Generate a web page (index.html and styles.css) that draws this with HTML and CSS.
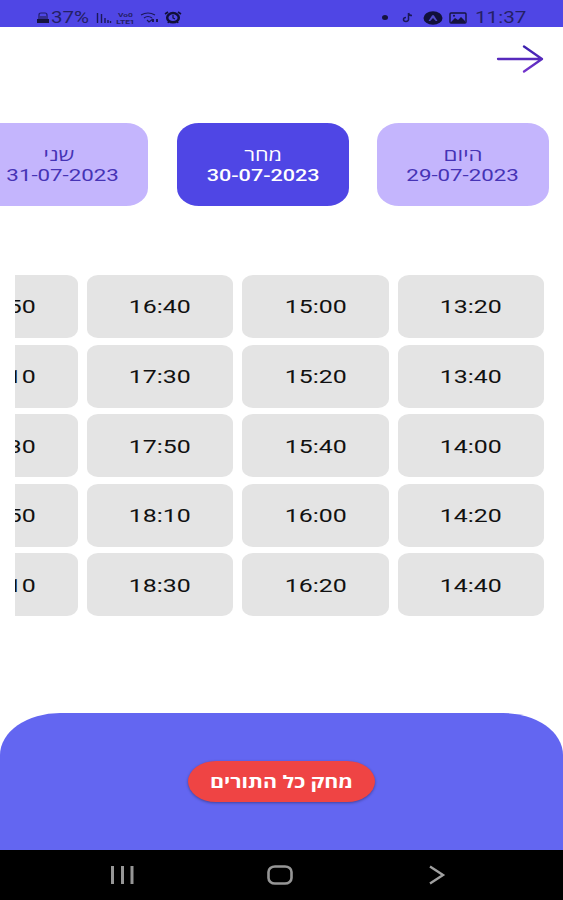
FILE: index.html
```html
<!DOCTYPE html>
<html lang="he">
<head>
  <meta charset="UTF-8">
  <title>תורים</title>
  <link rel="stylesheet" href="styles.css">
</head>
<body>

  <header class="status">
    <div class="status-group">
      <svg class="battery" width="14" height="12" viewBox="0 0 14 12">
        <path d="M3 6V3Q3 1 5 1H9Q11 1 11 3V6" fill="none" stroke="#201d70" stroke-width="1.2"/>
        <path d="M2 4H12V7H2Z" fill="#352e91"/>
        <path d="M1 7H13V11H1Z" fill="#15133f"/>
      </svg>
      <span class="status-text percent"><span class="wide">37%</span></span>
      <svg class="signal" width="16" height="12" viewBox="0 0 16 12" stroke="#1b1857" stroke-width="1.4">
        <path d="M1.5 1V11M5.5 2V11M9 6V11M12 8V11M14.5 9V11"/>
      </svg>
      <span class="volte"><span>Vo0</span><span>LTE1</span></span>
      <svg class="wifi" width="20" height="12" viewBox="0 0 20 12" fill="none" stroke="#1b1857" stroke-width="1.2">
        <path d="M1 3Q8 -1 15 3M4 6Q8 3 12 6M7 8L9 10L13 7"/>
        <path d="M13 10V7M17 7V10" stroke-width="2"/>
      </svg>
      <svg class="alarm" width="18" height="13" viewBox="0 0 18 13">
        <path d="M1 3L4 1M17 3L14 1M4 12L5 10M14 12L13 10" stroke="#100f38" stroke-width="1.6"/>
        <ellipse cx="9" cy="6.7" rx="5.8" ry="4.6" fill="none" stroke="#100f38" stroke-width="2.5"/>
        <path d="M9 4V7L11 8" fill="none" stroke="#100f38" stroke-width="1.2"/>
      </svg>
    </div>
    <div class="status-group">
      <span class="dot"></span>
      <svg class="note" width="11" height="11" viewBox="0 0 11 11" fill="none" stroke="#1b1857" stroke-width="1.5">
        <path d="M6.5 1V7.5A2.5 2 0 1 1 4 5.5M6.5 1Q7 3.5 10 3.5"/>
      </svg>
      <svg class="expo" width="20" height="14" viewBox="0 0 20 14">
        <ellipse cx="10" cy="7" rx="9.5" ry="6.8" fill="#11103b"/>
        <path d="M5.5 10L9 4.5Q10 3.5 11 4.5L14.5 10L12.8 10L10 7L7.2 10Z" fill="#5049c9"/>
      </svg>
      <svg class="picture" width="18" height="12" viewBox="0 0 18 12">
        <rect x="1" y="1" width="16" height="10" rx="1" fill="none" stroke="#15133f" stroke-width="1.4"/>
        <path d="M2 10L6 6L9 8L12 5L16 9V11H2Z" fill="#15133f"/>
        <circle cx="5" cy="3.8" r="1" fill="#15133f"/>
      </svg>
      <span class="status-text clock"><span class="wide">11:37</span></span>
    </div>
  </header>

  <nav class="topbar">
    <svg width="48" height="30" viewBox="0 0 48 30" fill="none" stroke="url(#arrow)" stroke-width="2.3" stroke-linecap="round" stroke-linejoin="round">
      <defs>
        <linearGradient id="arrow" gradientUnits="userSpaceOnUse" x1="0" y1="2" x2="0" y2="28">
          <stop offset="0" stop-color="#3a20ad"/>
          <stop offset="1" stop-color="#7434cc"/>
        </linearGradient>
      </defs>
      <path d="M2 15H46M28 2.5L46 15L28 27.5"/>
    </svg>
  </nav>

  <section class="days" dir="rtl">
    <div class="day"><span class="wide">היום</span><span class="wide" dir="ltr">29-07-2023</span></div>
    <div class="day active"><span class="wide">מחר</span><span class="wide" dir="ltr">30-07-2023</span></div>
    <div class="day monday"><span class="wide name">שני</span><span class="wide" dir="ltr">31-07-2023</span></div>
  </section>

  <main class="slots" dir="rtl">
    <div class="slot"><span class="wide">13:20</span></div>
    <div class="slot"><span class="wide">13:40</span></div>
    <div class="slot"><span class="wide">14:00</span></div>
    <div class="slot"><span class="wide">14:20</span></div>
    <div class="slot"><span class="wide">14:40</span></div>
    <div class="slot"><span class="wide">15:00</span></div>
    <div class="slot"><span class="wide">15:20</span></div>
    <div class="slot"><span class="wide">15:40</span></div>
    <div class="slot"><span class="wide">16:00</span></div>
    <div class="slot"><span class="wide">16:20</span></div>
    <div class="slot"><span class="wide">16:40</span></div>
    <div class="slot"><span class="wide">17:30</span></div>
    <div class="slot"><span class="wide">17:50</span></div>
    <div class="slot"><span class="wide">18:10</span></div>
    <div class="slot"><span class="wide">18:30</span></div>
    <div class="slot"><span class="wide">18:50</span></div>
    <div class="slot"><span class="wide">19:10</span></div>
    <div class="slot"><span class="wide">19:30</span></div>
    <div class="slot"><span class="wide">19:50</span></div>
    <div class="slot"><span class="wide">20:10</span></div>
  </main>

  <footer class="bottom">
    <button class="delete" dir="rtl"><span class="wide">מחק כל התורים</span></button>
  </footer>

  <div class="android-nav">
    <svg width="26" height="20" viewBox="0 0 26 20" stroke="#969696" stroke-width="3">
      <path d="M3.5 1V19M13.5 1V19M23 1V19"/>
    </svg>
    <svg class="home" width="28" height="20" viewBox="0 0 28 20">
      <rect x="2.5" y="1.5" width="23" height="17" rx="6.5" ry="5.5" fill="none" stroke="#969696" stroke-width="2.6"/>
    </svg>
    <svg width="18" height="20" viewBox="0 0 18 20" fill="none" stroke="#a0a0a0" stroke-width="2.4">
      <path d="M2 1.5L15 10L2 18.5"/>
    </svg>
  </div>

</body>
</html>
```
FILE: styles.css
```css
* {
  box-sizing: border-box;
}
body {
  margin: 0;
  width: 563px;
  height: 900px;
  overflow: hidden;
  display: flex;
  flex-direction: column;
  background-color: #fff;
  font-family: Roboto, "Open Sans", "Liberation Sans", sans-serif;
}
svg {
  display: block;
  flex: none;
}
.wide {
  display: block;
  white-space: nowrap;
  transform: scaleX(1.29);
}
.status {
  height: 27px;
  flex: none;
  display: flex;
  justify-content: space-between;
  padding: 8px 37px 0 36px;
  background-color: #4f46e5;
  color: #242066;
}
.status-group {
  display: flex;
  align-items: center;
  height: 19px;
}
.status-text {
  font-size: 16px;
  line-height: 19px;
}
.status-text .wide {
  transform-origin: left;
}
.percent {
  width: 45px;
  margin-left: 1px;
}
.percent .wide {
  transform: scaleX(1.28);
}
.clock {
  width: 51px;
  margin-left: 8px;
}
.volte {
  width: 21px;
  margin: 0 4px 0 3px;
  font-size: 6px;
  line-height: 7px;
  font-weight: bold;
  text-align: center;
}
.volte span {
  display: block;
  transform: scaleX(1.4);
}
.alarm {
  margin-left: 4px;
}
.dot {
  width: 6px;
  height: 5px;
  border-radius: 50%;
  background-color: #15133f;
}
.note {
  margin-left: 14px;
}
.expo {
  margin-left: 10px;
}
.picture {
  margin-left: 6px;
}
.topbar {
  height: 96px;
  flex: none;
  display: flex;
  justify-content: flex-end;
  padding: 17px 19px 0 0;
}
.days {
  flex: none;
  display: flex;
  gap: 28.7px;
  height: 83px;
  padding-right: 14.3px;
  margin-top: 0.4px;
  overflow: hidden;
}
.day {
  flex: none;
  width: 171.5px;
  display: flex;
  flex-direction: column;
  align-items: center;
  justify-content: center;
  padding-top: 1px;
  border-radius: 22px / 18px;
  background-color: #c4b5fd;
  color: #4633b5;
  font-size: 17.3px;
  line-height: 20px;
}
.day.active {
  background-color: #4f46e5;
  color: #fff;
  font-weight: 500;
}
.day.active .wide {
  transform: scaleX(1.25);
}
.day.monday .name {
  margin-right: 7px;
}
.slots {
  flex: none;
  display: grid;
  grid-template-rows: repeat(5, 63px);
  grid-auto-flow: column;
  grid-auto-columns: 146.5px;
  gap: 6.6px 9px;
  margin: 68.6px 19px 0 15px;
  overflow: hidden;
}
.slot {
  display: flex;
  align-items: center;
  justify-content: center;
  padding-top: 1px;
  border-radius: 11px / 9px;
  background-color: #e4e4e4;
  color: #111;
  font-size: 19px;
}
.slot .wide {
  transform: scaleX(1.31);
}
.bottom {
  flex: none;
  height: 137px;
  margin-top: auto;
  display: flex;
  justify-content: center;
  align-items: flex-start;
  padding-top: 48px;
  border-radius: 60px 60px 0 0 / 42px 42px 0 0;
  background-color: #6366f1;
}
.delete {
  width: 187px;
  height: 41px;
  padding: 0;
  border: none;
  border-radius: 28px / 20.5px;
  background-color: #ef4444;
  box-shadow: 0 1px 3px rgba(0, 0, 0, 0.35);
  color: #fff;
  font-family: inherit;
  font-size: 17px;
  font-weight: bold;
}
.delete .wide {
  transform: scaleX(1.26);
}
.android-nav {
  flex: none;
  height: 50px;
  display: flex;
  align-items: center;
  justify-content: space-between;
  padding: 0 117px 0 109px;
  background-color: #000;
}
.home {
  margin-right: 4px;
}
```
